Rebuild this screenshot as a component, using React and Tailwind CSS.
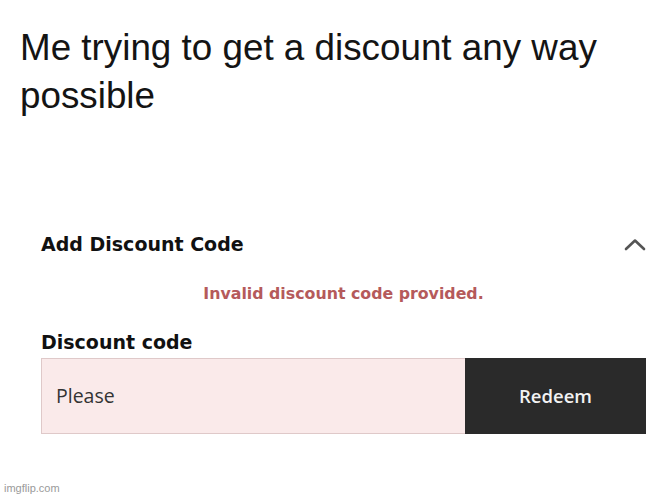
import React from "react";

const ChevronUp = () => (
  <svg width="22" height="13" viewBox="0 0 22 13" fill="none">
    <path d="M2 11 L11 2.5 L20 11" stroke="#555" strokeWidth="2.6" strokeLinecap="round" strokeLinejoin="round" />
  </svg>
);

const App = () => {
  return (
    <div className="relative w-[660px] h-[500px] bg-white overflow-hidden">
      {/* Tweet text */}
      <p className="pt-[24px] pl-[20px] pr-[20px] text-[36.8px] leading-[48px] text-[#141414] font-['Liberation_Sans',Arial,sans-serif]">
        Me trying to get a discount any way possible
      </p>

      {/* Discount form */}
      <div className="ml-[41px] w-[605px] mt-[112px] font-['DejaVu_Sans',sans-serif]">
        <div className="flex items-center justify-between">
          <h2 className="text-[19px] leading-[24px] font-bold text-[#111]">Add Discount Code</h2>
          <ChevronUp />
        </div>

        <p className="mt-[28px] text-center text-[15.8px] leading-[20px] font-bold text-[#b55a5b]">
          Invalid discount code provided.
        </p>

        <label className="block mt-[25px] text-[19px] leading-[26px] font-bold text-[#111]">Discount code</label>

        <div className="flex h-[76px] mt-[3px] font-['Open_Sans',sans-serif]">
          <div className="flex-1 flex items-center pl-[14px] bg-[#faeaea] border-[1.5px] border-r-0 border-[#dfc9c9] text-[19.5px] text-[#333]">
            Please
          </div>
          <button className="w-[181px] bg-[#2a2a2a] text-[#f2f2f2] text-[18.5px] font-semibold">
            Redeem
          </button>
        </div>
      </div>

      <span className="absolute left-[4px] bottom-[4px] text-[11px] text-[#9a9a9a] font-['Liberation_Sans_Narrow','Liberation_Sans',sans-serif]">
        imgflip.com
      </span>
    </div>
  );
};

export default App;
